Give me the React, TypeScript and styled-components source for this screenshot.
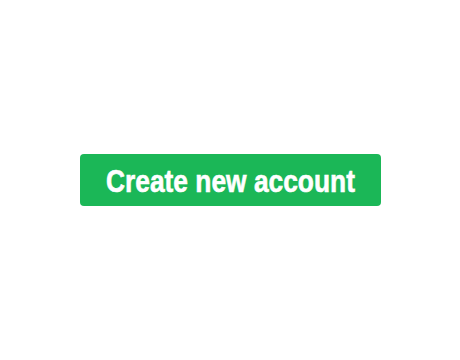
import React from "react";
import styled, { createGlobalStyle } from "styled-components";

const Global = createGlobalStyle`
  html, body { margin: 0; padding: 0; background: #ffffff; }
  #root { width: 460px; height: 360px; }
`;

const Page = styled.div`
  width: 460px;
  height: 360px;
  display: flex;
  align-items: center;
  justify-content: center;
`;

const Button = styled.button`
  box-sizing: border-box;
  width: 301px;
  height: 52px;
  border: none;
  border-radius: 4px;
  background: #1bb757;
  color: #ffffff;
  display: flex;
  align-items: center;
  justify-content: center;
  padding: 0;
  cursor: pointer;
  overflow: visible;
`;

const Label = styled.span`
  display: inline-block;
  white-space: nowrap;
  font-family: "Liberation Sans", Arial, sans-serif;
  font-weight: 700;
  font-size: 31px;
  line-height: 1;
  letter-spacing: 0px;
  -webkit-text-stroke: 0.6px #ffffff;
  transform: scaleX(0.85);
  transform-origin: center;
  margin-top: 2px;
`;

export default function App() {
  return (
    <>
      <Global />
      <Page>
        <Button>
          <Label>Create new account</Label>
        </Button>
      </Page>
    </>
  );
}
